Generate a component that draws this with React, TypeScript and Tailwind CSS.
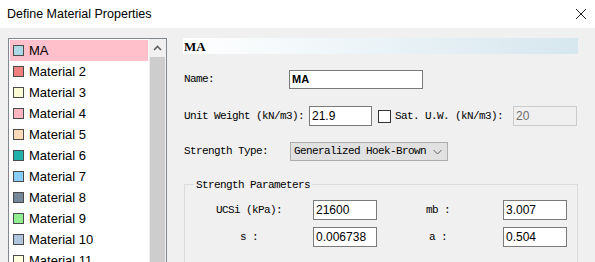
import React from "react";

const mono = "font-['Liberation_Mono',monospace] text-[11px] tracking-[-0.6px] text-black";
const sans = "font-['Liberation_Sans',Arial,sans-serif]";

const items: [string, string][] = [
  ["MA", "#add8e6"],
  ["Material 2", "#f08080"],
  ["Material 3", "#fafad2"],
  ["Material 4", "#ffb6c1"],
  ["Material 5", "#ffdab9"],
  ["Material 6", "#20b2aa"],
  ["Material 7", "#87cefa"],
  ["Material 8", "#778899"],
  ["Material 9", "#90ee90"],
  ["Material 10", "#b0c4de"],
  ["Material 11", "#ffffe0"],
];

function Input({ value, w }: { value: string; w: string }) {
  return (
    <div
      className={`${w} h-[20px] bg-white border border-[#7a7a7a] flex items-center pl-[2px] ${sans} text-[12px] text-black`}
    >
      {value}
    </div>
  );
}

export default function App() {
  return (
    <div className="w-[595px] h-[262px] overflow-hidden bg-[#f0f0f0] flex flex-col">
      <div className="h-[28px] bg-white flex items-center pl-[7px] pr-[7px] shrink-0">
        <span className={`${sans} text-[12.5px] text-black flex-1`}>Define Material Properties</span>
        <svg width="12" height="12" viewBox="0 0 12 12" className="mr-[1px]">
          <path d="M1 1 L11 11 M11 1 L1 11" stroke="#222" strokeWidth="1" />
        </svg>
      </div>
      <div className="flex flex-1">
        {/* list */}
        <div className="ml-[8px] mt-[10px] w-[159px] h-[240px] border border-[#828790] bg-white flex shrink-0">
          <div className="flex-1 pt-[1px] px-[1px] flex flex-col">
            {items.map(([name, color], i) => (
              <div
                key={name}
                className={`h-[21px] flex items-center shrink-0 ${i === 0 ? "bg-[#ffc0cb]" : ""}`}
              >
                <div
                  className="w-[11px] h-[11px] ml-[3px] border border-[#4a4a4a]"
                  style={{ backgroundColor: color }}
                />
                <span className={`${sans} text-[13px] text-black ml-[5px] leading-none`}>{name}</span>
              </div>
            ))}
          </div>
          <div className="w-[17px] bg-[#f0f0f0] flex flex-col">
            <div className="h-[18px] flex items-center justify-center">
              <svg width="9" height="6" viewBox="0 0 9 6">
                <path d="M1 5 L4.5 1.5 L8 5" stroke="#606060" strokeWidth="1.6" fill="none" />
              </svg>
            </div>
            <div className="flex-1 mx-[1px] bg-[#cdcdcd]" />
          </div>
        </div>

        {/* right panel */}
        <div className="ml-[16px] mt-[10px] w-[395px] flex flex-col">
          <div className="h-[16px] bg-gradient-to-r from-white to-[#d6e7ee] flex items-center pl-[1px]">
            <span className="font-['Liberation_Serif',serif] font-bold text-[13px] text-black leading-none">MA</span>
          </div>

          <div className="mt-[16px] h-[19px] flex items-center">
            <div className={`w-[106px] pl-[1px] ${mono}`}>Name:</div>
            <div className="w-[134px] h-[19px] bg-white border border-[#7a7a7a] flex items-center pl-[2px]">
              <span className={`${sans} text-[11px] font-bold text-black`}>MA</span>
            </div>
          </div>

          <div className="mt-[17px] h-[20px] flex items-center">
            <div className={`w-[126px] pl-[1px] ${mono}`}>Unit Weight (kN/m3):</div>
            <Input value="21.9" w="w-[63px]" />
            <div className="ml-[6px] w-[13px] h-[13px] bg-white border border-[#333]" />
            <div className={`ml-[4px] ${mono}`}>Sat. U.W. (kN/m3):</div>
            <div
              className={`ml-auto mr-[1px] w-[64px] h-[20px] border border-[#cccccc] bg-[#f0f0f0] flex items-center pl-[2px] ${sans} text-[12px] text-[#6d6d6d]`}
            >
              20
            </div>
          </div>

          <div className="mt-[16px] h-[19px] flex items-center">
            <div className={`w-[107px] pl-[1px] ${mono}`}>Strength Type:</div>
            <div className="w-[158px] h-[19px] bg-[#e1e1e1] border border-[#adadad] flex items-center pl-[3px] pr-[5px]">
              <span className={`${mono} flex-1`}>Generalized Hoek-Brown</span>
              <svg width="9" height="6" viewBox="0 0 9 6">
                <path d="M0.5 1 L4.5 5 L8.5 1" stroke="#606060" strokeWidth="1" fill="none" />
              </svg>
            </div>
          </div>

          <div className="mt-[23px] ml-[1px] w-[394px] h-[120px] border border-[#dcdcdc] relative pt-[15px] flex flex-col">
            <span className={`absolute -top-[8px] left-[9px] bg-[#f0f0f0] px-[2px] ${mono}`}>Strength Parameters</span>
            <div className="h-[20px] flex items-center">
              <div className={`w-[128px] text-center ${mono}`}>UCSi (kPa):</div>
              <Input value="21600" w="w-[64px]" />
              <div className={`w-[122px] text-center ${mono}`}>mb :</div>
              <div className="ml-[4px]">
                <Input value="3.007" w="w-[64px]" />
              </div>
            </div>
            <div className="mt-[7px] h-[20px] flex items-center">
              <div className={`w-[128px] text-center ${mono}`}>s :</div>
              <Input value="0.006738" w="w-[64px]" />
              <div className={`w-[122px] text-center ${mono}`}>a :</div>
              <div className="ml-[4px]">
                <Input value="0.504" w="w-[64px]" />
              </div>
            </div>
          </div>
        </div>
      </div>
    </div>
  );
}
